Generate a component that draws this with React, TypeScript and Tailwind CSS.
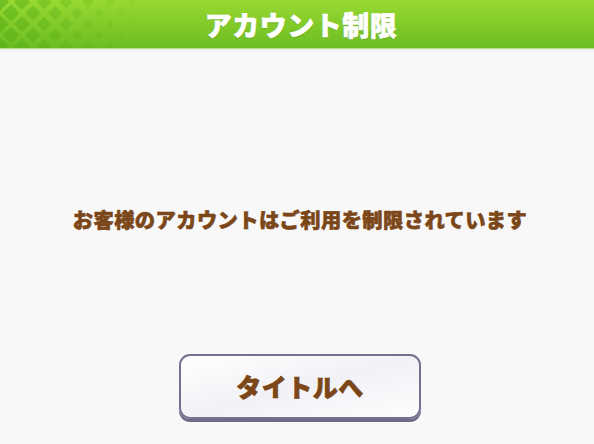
import React from "react";

const jp = { fontFamily: '"Noto Sans CJK JP", "Noto Sans", sans-serif' };

// lattice of diamonds on the left of the header, shrinking and fading to the right
function DiamondPattern() {
  const cells: { x: number; y: number; r: number; o: number }[] = [];
  const step = 22;
  for (let col = 0; col < 9; col++) {
    for (let row = -1; row < 6; row++) {
      const x = col * step + (row % 2 === 0 ? 0 : step / 2);
      const y = row * (step / 2) + 2;
      const t = x / 150;
      const r = Math.max(0, 9 * (1 - t * 0.7));
      const o = Math.max(0, 0.55 * (1 - t));
      if (r > 1 && o > 0.03) cells.push({ x, y, r, o });
    }
  }
  return (
    <svg className="absolute left-0 top-0" width="200" height="48" viewBox="0 0 200 48">
      {cells.map((c, i) => (
        <polygon
          key={i}
          points={`${c.x},${c.y - c.r} ${c.x + c.r},${c.y} ${c.x},${c.y + c.r} ${c.x - c.r},${c.y}`}
          fill="#55ad18"
          opacity={c.o}
        />
      ))}
    </svg>
  );
}

export default function App() {
  return (
    <div className="w-[594px] h-[444px] bg-[#f8f8f8] flex flex-col overflow-hidden" style={jp}>
      {/* header */}
      <div className="relative h-[48px] pl-[8px] bg-gradient-to-b from-[#98d931] to-[#6cbd22] flex items-center justify-center">
        <DiamondPattern />
        <h1 className="relative text-white text-[27px] font-black tracking-[0.5px] leading-none [-webkit-text-stroke:0.6px_#ffffff] [text-shadow:0_1px_1px_rgba(40,100,0,0.35)]">
          アカウント制限
        </h1>
      </div>
      <div className="h-[1px] bg-[#b8e58a]" />
      <div className="h-[3px] bg-gradient-to-b from-[#e9ece6] to-[#f8f8f8]" />

      {/* message */}
      <div className="flex-1 flex flex-col items-center pl-[6px]">
        <p className="mt-[157px] text-[20.3px] font-black text-[#7b4718] leading-none tracking-[0.4px] [-webkit-text-stroke:0.6px_#7b4718]">
          お客様のアカウントはご利用を制限されています
        </p>

        <button className="mt-[125px] w-[242px] h-[65px] rounded-[11px] border-2 border-[#777090] bg-gradient-to-br from-[#ffffff] via-[#f2f1f6] to-[#fdfdfe] shadow-[0_3px_0_#716a86] flex items-center justify-center">
          <span className="text-[25px] font-black text-[#7b4718] leading-none tracking-[0.5px] [-webkit-text-stroke:0.7px_#7b4718]">
            タイトルへ
          </span>
        </button>
      </div>
    </div>
  );
}
